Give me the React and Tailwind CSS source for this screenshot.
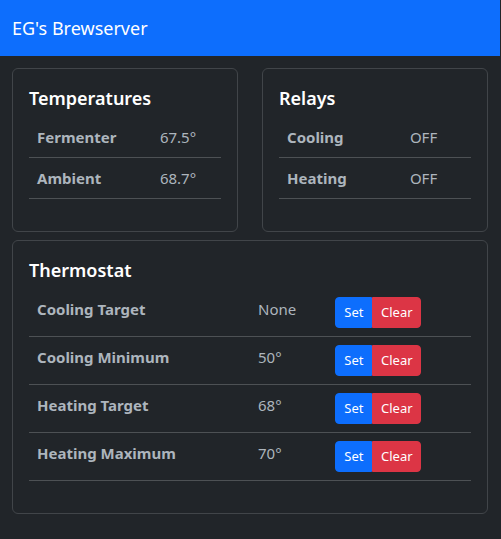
const temperatures = [
  { label: 'Fermenter', value: '67.5°' },
  { label: 'Ambient', value: '68.7°' },
];

const relays = [
  { label: 'Cooling', value: 'OFF' },
  { label: 'Heating', value: 'OFF' },
];

const settings = [
  { label: 'Cooling Target', value: 'None' },
  { label: 'Cooling Minimum', value: '50°' },
  { label: 'Heating Target', value: '68°' },
  { label: 'Heating Maximum', value: '70°' },
];

function Card({ title, children }) {
  return (
    <section className="rounded-md border border-[#414549] p-4">
      <h2 className="mb-[6px] text-lg leading-[26px] font-semibold text-white">{title}</h2>
      {children}
    </section>
  );
}

function ReadingTable({ rows }) {
  return (
    <table className="mb-4 w-full table-fixed">
      <tbody>
        {rows.map((row) => (
          <tr key={row.label} className="border-b border-[#4d5154]">
            <th scope="row" className="w-[64%] p-2 text-left font-bold">
              {row.label}
            </th>
            <td className="p-2">{row.value}</td>
          </tr>
        ))}
      </tbody>
    </table>
  );
}

export default function App() {
  return (
    <div className="min-h-screen border-r border-[#212529] bg-[#212529] font-['Noto_Sans','Open_Sans',sans-serif] text-[15px] leading-6 text-[#adb5bd]">
      <nav className="bg-[#0d6efd] px-3 py-3">
        <a href="#" className="block text-lg leading-8 text-white">
          EG's Brewserver
        </a>
      </nav>
      <main className="p-3">
        <div className="mb-2 grid grid-cols-2 gap-6">
          <Card title="Temperatures">
            <ReadingTable rows={temperatures} />
          </Card>
          <Card title="Relays">
            <ReadingTable rows={relays} />
          </Card>
        </div>
        <Card title="Thermostat">
          <table className="mb-4 w-full table-fixed">
            <tbody>
              {settings.map((row) => (
                <tr key={row.label} className="border-b border-[#4d5154] align-top">
                  <th scope="row" className="w-1/2 p-2 text-left font-bold">
                    {row.label}
                  </th>
                  <td className="w-[17.5%] p-2">{row.value}</td>
                  <td className="p-2">
                    <div className="flex text-[13px] leading-[21px] text-white">
                      <button
                        type="button"
                        aria-label={`Set ${row.label}`}
                        className="w-[37px] rounded-l border border-[#0d6efd] bg-[#0d6efd] py-1 text-center"
                      >
                        Set
                      </button>
                      <button
                        type="button"
                        aria-label={`Clear ${row.label}`}
                        className="w-[49px] rounded-r border border-[#dc3545] bg-[#dc3545] py-1 text-center"
                      >
                        Clear
                      </button>
                    </div>
                  </td>
                </tr>
              ))}
            </tbody>
          </table>
        </Card>
      </main>
    </div>
  );
}
